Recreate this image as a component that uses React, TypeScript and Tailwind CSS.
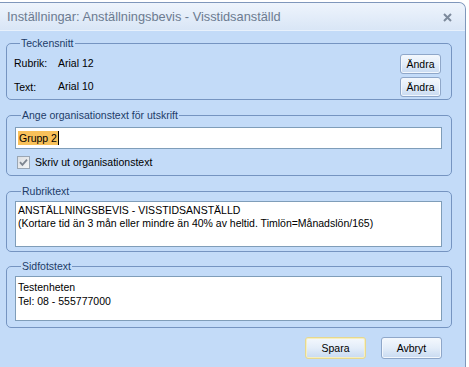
import React from "react";

const font = { fontFamily: '"Liberation Sans", Arial, sans-serif' };

function Btn({ label, w, h, def }: { label: string; w: string; h: string; def?: boolean }) {
  return (
    <button
      type="button"
      className={`${w} ${h} flex items-center justify-center rounded-[3px] border bg-gradient-to-b from-[#f4f8fd] via-[#e3edf9] to-[#c8daf1] text-[10.5px] leading-none text-black ${
        def ? "border-[#e6d890] shadow-[inset_0_0_0_1px_#f6efc0]" : "border-[#8fa7c9] shadow-[inset_0_0_0_1px_#f2f7fd]"
      }`}
    >
      {label}
    </button>
  );
}

function Group({ title, className, children }: { title: string; className: string; children: React.ReactNode }) {
  return (
    <fieldset className={`mx-0 rounded-[5px] border border-[#7594c1] ${className}`}>
      <legend className="ml-[6px] px-[1px] text-[10.5px] leading-[13px] text-[#1d3b68]">{title}</legend>
      {children}
    </fieldset>
  );
}

export default function App() {
  return (
    <div className="h-[367px] w-[469px] overflow-hidden bg-white" style={font}>
      <div className="mt-[2px] flex h-[365px] w-[466px] flex-col rounded-tr-[7px] border-t border-r border-[#7f97bb] bg-[#c3dbf8]">
        <div className="flex h-[28px] items-center justify-between rounded-tr-[6px] border-b border-[#e8f1fc] bg-gradient-to-b from-[#eef4fc] to-[#d9e6f6] pl-[7px] pr-[13px]">
          <span className="text-[12.8px] text-[#6c7b90]">Inställningar: Anställningsbevis - Visstidsanställd</span>
          <svg width="9" height="9" viewBox="0 0 9 9" className="mt-[1px]">
            <path d="M1 1 L8 8 M8 1 L1 8" stroke="#7d8a9c" strokeWidth="2" />
          </svg>
        </div>

        <div className="flex flex-1 flex-col pl-[6px] pr-[13px]">
          <Group title="Teckensnitt" className="mt-[6px] pl-[7px] pr-[10px] pt-[4px] pb-[2px]">
            <div className="flex h-[20px] items-center text-[10.5px] text-black">
              <span className="w-[44px]">Rubrik:</span>
              <span className="flex-1">Arial 12</span>
              <Btn label="Ändra" w="w-[41px]" h="h-[20px]" />
            </div>
            <div className="mt-[3px] flex h-[20px] items-center text-[10.5px] text-black">
              <span className="w-[44px] pt-[2px]">Text:</span>
              <span className="flex-1">Arial 10</span>
              <Btn label="Ändra" w="w-[41px]" h="h-[20px]" />
            </div>
          </Group>

          <Group title="Ange organisationstext för utskrift" className="mt-[9px] pl-[8px] pr-[9px] pt-[5px] pb-[6px]">
            <div className="flex h-[22px] items-center border border-[#7f9db9] bg-white pl-[2px]">
              <span className="bg-[#f8c15a] px-[1px] text-[10.5px] leading-[14px] text-black">Grupp 2</span>
              <span className="h-[14px] w-[1px] bg-black" />
            </div>
            <div className="mt-[7px] flex h-[13px] items-center gap-[5px]">
              <span className="ml-[2px] flex h-[13px] w-[13px] items-center justify-center border border-[#9aa6b4] bg-gradient-to-br from-[#dcdfe3] to-[#f4f5f6]">
                <svg width="9" height="9" viewBox="0 0 9 9">
                  <path d="M1 4.2 L3.4 6.8 L8 1.6" stroke="#7d8590" strokeWidth="1.8" fill="none" />
                </svg>
              </span>
              <span className="text-[10.5px] text-black">Skriv ut organisationstext</span>
            </div>
          </Group>

          <Group title="Rubriktext" className="mt-[9px] pl-[8px] pr-[9px] pt-[3px] pb-[4px]">
            <div className="h-[46px] border border-[#7f9db9] bg-white px-[2px] pt-[2px] text-[10.5px] leading-[13px] text-black">
              <div>ANSTÄLLNINGSBEVIS - VISSTIDSANSTÄLLD</div>
              <div>(Kortare tid än 3 mån eller mindre än 40% av heltid. Timlön=Månadslön/165)</div>
            </div>
          </Group>

          <Group title="Sidfotstext" className="mt-[8px] pl-[8px] pr-[9px] pt-[3px] pb-[6px]">
            <div className="h-[45px] border border-[#7f9db9] bg-white px-[2px] pt-[3px] text-[10.5px] leading-[14px] text-black">
              <div>Testenheten</div>
              <div>Tel: 08 - 555777000</div>
            </div>
          </Group>

          <div className="mt-[9px] flex justify-end gap-[15px] pr-[10px]">
            <Btn label="Spara" w="w-[61px]" h="h-[22px]" def />
            <Btn label="Avbryt" w="w-[61px]" h="h-[22px]" />
          </div>
        </div>
      </div>
    </div>
  );
}
